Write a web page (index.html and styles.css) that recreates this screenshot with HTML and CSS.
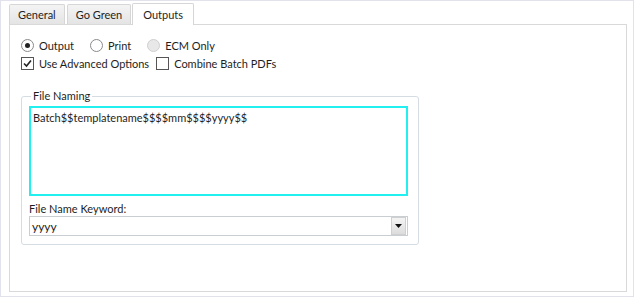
FILE: index.html
```html
<!DOCTYPE html>
<html lang="en">
<head>
  <meta charset="UTF-8">
  <title>Outputs</title>
  <link rel="stylesheet" href="styles.css">
</head>
<body>

<div class="window">
  <div class="tabs">
    <div class="tab">General</div>
    <div class="tab">Go Green</div>
    <div class="tab active">Outputs</div>
  </div>

  <div class="panel">
    <div class="row radios">
      <label class="opt"><span class="radio checked"></span>Output</label>
      <label class="opt"><span class="radio"></span>Print</label>
      <label class="opt disabled"><span class="radio"></span>ECM Only</label>
    </div>
    <div class="row">
      <label class="opt">
        <span class="check">
          <svg width="11" height="11" viewBox="0 0 11 11"><path d="M2 5.5 L4.5 8 L9 2.5" fill="none" stroke="#222" stroke-width="1.6"/></svg>
        </span>Use Advanced Options
      </label>
      <label class="opt"><span class="check"></span>Combine Batch PDFs</label>
    </div>

    <fieldset class="group">
      <legend>File Naming</legend>
      <div class="textbox">Batch$$templatename$$$$mm$$$$yyyy$$</div>
      <div class="field-label">File Name Keyword:</div>
      <div class="combo">
        <span class="combo-text">yyyy</span>
        <span class="combo-btn">
          <svg width="7" height="4" viewBox="0 0 7 4"><path d="M0 0 H7 L3.5 4 Z" fill="#111"/></svg>
        </span>
      </div>
    </fieldset>
  </div>
</div>

</body>
</html>
```

FILE: styles.css
```css
body {
  margin: 0;
  background: white;
  font-family: 'Segoe UI', Lato, sans-serif;
  font-size: 11px;
  color: #1e1e1e;
}

.window {
  width: 634px;
  height: 297px;
  box-sizing: border-box;
  border: 1px solid #e2e2ec;
  padding: 1px 6px 0 8px;
}

.tabs {
  display: flex;
  align-items: flex-end;
  height: 22px;
}

.tab {
  height: 19px;
  line-height: 19px;
  padding: 0 8px;
  margin-right: 2px;
  border: 1px solid #d6d6d6;
  border-bottom: none;
  border-radius: 2px 2px 0 0;
  background: linear-gradient(#f4f4f4, #e4e4e4);
}

.tab.active {
  height: 21px;
  line-height: 22px;
  padding: 0 10px;
  background: white;
  margin-bottom: -1px;
  margin-left: -1px;
  position: relative;
}

.panel {
  height: 268px;
  box-sizing: border-box;
  border: 1px solid #d9d9d9;
  padding: 11px 0 0 11px;
}

.row {
  display: flex;
  height: 18px;
  align-items: center;
}

.opt {
  display: flex;
  align-items: center;
  margin-right: 7px;
}

.radios .opt {
  margin-right: 16px;
}

.radio {
  width: 11px;
  height: 11px;
  border: 1px solid #8a8a8a;
  border-radius: 50%;
  margin-right: 5px;
  background: white;
  position: relative;
}

.radio.checked::after {
  content: "";
  position: absolute;
  left: 3px;
  top: 3px;
  width: 5px;
  height: 5px;
  border-radius: 50%;
  background: #222;
}

.disabled .radio {
  border-color: #cfcfcf;
  background: #e8e8e8;
}

.check {
  width: 11px;
  height: 11px;
  border: 1px solid #555;
  margin-right: 5px;
  display: flex;
  align-items: center;
  justify-content: center;
}

.group {
  width: 379px;
  margin: 16px 0 0 0;
  padding: 0 10px 8px 7px;
  border: 1px solid #d5dde3;
  border-radius: 3px;
}

.group legend {
  padding: 0 2px;
  margin-left: 2px;
  line-height: 16px;
}

.textbox {
  height: 80px;
  margin-top: 2px;
  border: 2px solid #22f0f0;
  padding: 3px 2px;
}

.field-label {
  margin-top: 6px;
  line-height: 14px;
}

.combo {
  display: flex;
  height: 18px;
  border: 1px solid #c9ced3;
  align-items: center;
}

.combo-text {
  flex: 1;
  padding-left: 2px;
  font-size: 12px;
}

.combo-btn {
  width: 13px;
  height: 16px;
  margin-right: 1px;
  border: 1px solid #d0d0d0;
  background: linear-gradient(#f4f4f4, #dcdcdc);
  display: flex;
  align-items: center;
  justify-content: center;
}
```
